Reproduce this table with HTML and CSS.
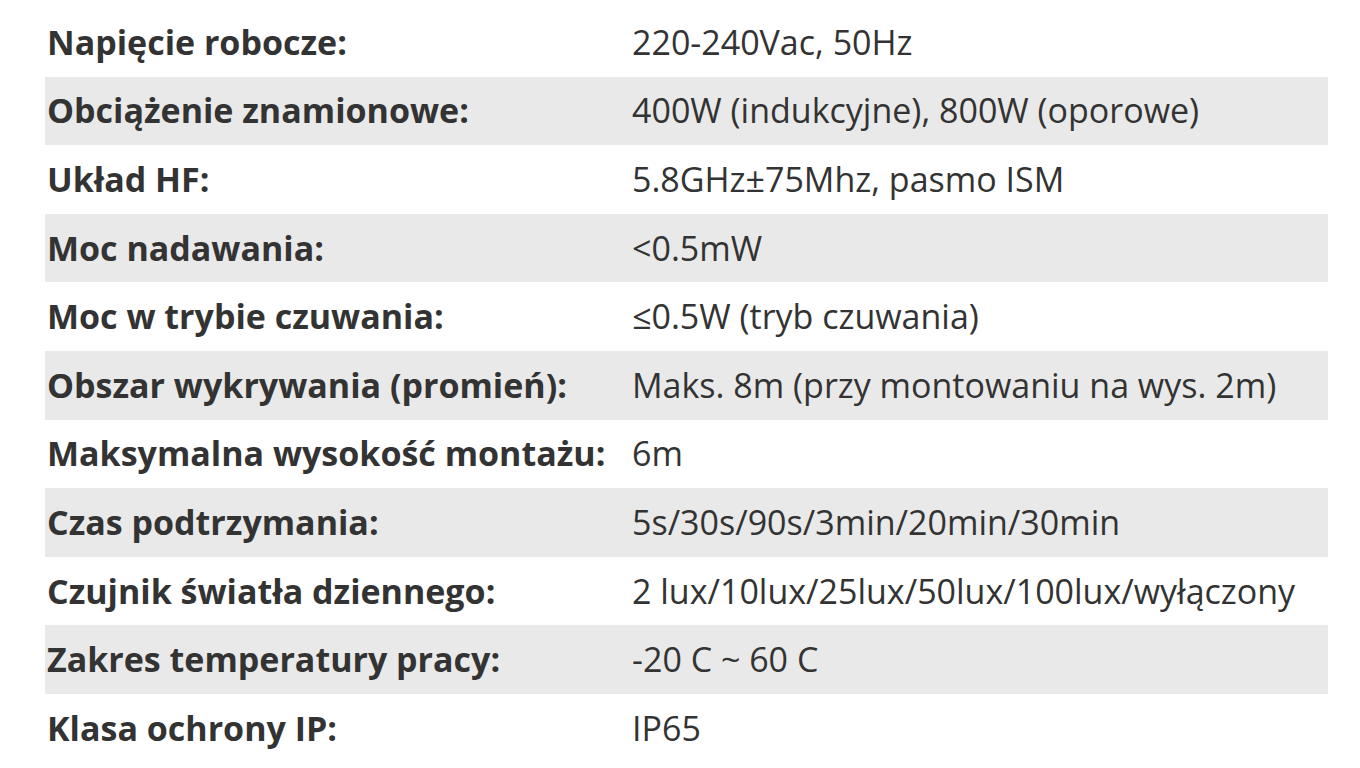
FILE: index.html
```html
<!DOCTYPE html>
<html lang="pl">
<head>
<meta charset="utf-8">
<link rel="stylesheet" href="styles.css">
</head>
<body>
<div class="specs">
  <div class="row"><div class="label">Napięcie robocze:</div><div class="value">220-240Vac, 50Hz</div></div>
  <div class="row alt"><div class="label">Obciążenie znamionowe:</div><div class="value">400W (indukcyjne), 800W (oporowe)</div></div>
  <div class="row"><div class="label">Układ HF:</div><div class="value">5.8GHz±75Mhz, pasmo ISM</div></div>
  <div class="row alt"><div class="label">Moc nadawania:</div><div class="value">&lt;0.5mW</div></div>
  <div class="row"><div class="label">Moc w trybie czuwania:</div><div class="value">≤0.5W (tryb czuwania)</div></div>
  <div class="row alt"><div class="label">Obszar wykrywania (promień):</div><div class="value">Maks. 8m (przy montowaniu na wys. 2m)</div></div>
  <div class="row"><div class="label">Maksymalna wysokość montażu:</div><div class="value">6m</div></div>
  <div class="row alt"><div class="label">Czas podtrzymania:</div><div class="value">5s/30s/90s/3min/20min/30min</div></div>
  <div class="row"><div class="label">Czujnik światła dziennego:</div><div class="value">2 lux/10lux/25lux/50lux/100lux/wyłączony</div></div>
  <div class="row alt"><div class="label">Zakres temperatury pracy:</div><div class="value">-20 C ~ 60 C</div></div>
  <div class="row"><div class="label">Klasa ochrony IP:</div><div class="value">IP65</div></div>
</div>
</body>
</html>
```
FILE: styles.css
```css
html, body {
  margin: 0;
  padding: 0;
  background: #ffffff;
}
body {
  font-family: "Open Sans", "Liberation Sans", sans-serif;
  color: #333333;
  overflow: hidden;
}
.specs {
  margin: 8px 0 0 45px;
  width: 1283px;
}
.row {
  display: grid;
  grid-template-columns: 587px 1fr;
  height: 68.6px;
  align-items: center;
  font-size: 34px;
  line-height: 1.2;
}
.row.alt {
  background: #e9e9e9;
}
.label {
  font-weight: 700;
  padding-left: 2px;
  white-space: nowrap;
}
.value {
  font-weight: 400;
  white-space: nowrap;
}
```
